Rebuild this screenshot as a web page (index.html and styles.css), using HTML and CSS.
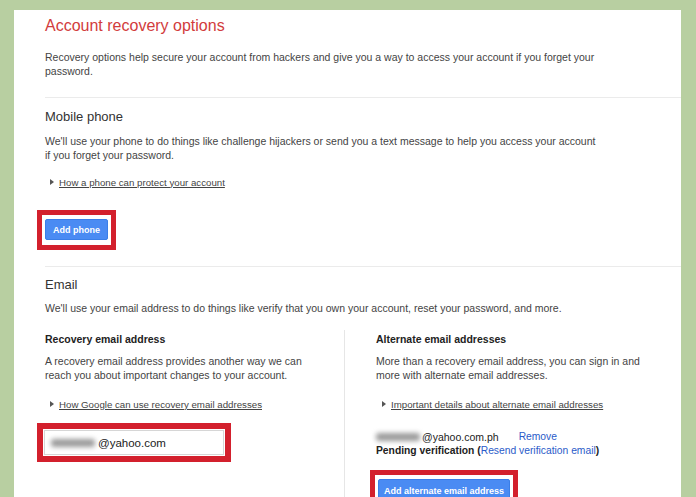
FILE: index.html
```html
<!DOCTYPE html>
<html>
<head>
<meta charset="utf-8">
<link rel="stylesheet" href="styles.css">
</head>
<body>
<div class="card">
  <h1 class="title">Account recovery options</h1>
  <p class="text intro">Recovery options help secure your account from hackers and give you a way to access your account if you forget your password.</p>

  <section class="sec sec-phone">
    <h2 class="heading">Mobile phone</h2>
    <p class="text desc">We'll use your phone to do things like challenge hijackers or send you a text message to help you access your account if you forget your password.</p>
    <div class="more"><span class="tri"></span><a class="more-link">How a phone can protect your account</a></div>
    <div class="hl hl-btn"><button class="btn">Add phone</button></div>
  </section>

  <section class="sec sec-email">
    <h2 class="heading">Email</h2>
    <p class="text desc">We'll use your email address to do things like verify that you own your account, reset your password, and more.</p>
    <div class="cols">
      <div class="col col-left">
        <h3 class="sub">Recovery email address</h3>
        <p class="text col-desc">A recovery email address provides another way we can reach you about important changes to your account.</p>
        <div class="more"><span class="tri"></span><a class="more-link">How Google can use recovery email addresses</a></div>
        <div class="hl hl-input"><div class="input"><span class="blur blur-a"></span>@yahoo.com</div></div>
      </div>
      <div class="col col-right">
        <h3 class="sub">Alternate email addresses</h3>
        <p class="text col-desc">More than a recovery email address, you can sign in and more with alternate email addresses.</p>
        <div class="more"><span class="tri"></span><a class="more-link">Important details about alternate email addresses</a></div>
        <div class="alt">
          <div class="alt-row"><span class="blur blur-b"></span><span class="alt-mail">@yahoo.com.ph</span><a class="blue">Remove</a></div>
          <div class="pending">Pending verification (<a class="blue">Resend verification email</a>)</div>
        </div>
        <div class="hl hl-btn hl-alt"><button class="btn">Add alternate email address</button></div>
      </div>
    </div>
  </section>
</div>
</body>
</html>
```

FILE: styles.css
```css
* { box-sizing: border-box; }
html, body { margin: 0; padding: 0; }
body {
  background: #b8cfa1;
  font-family: "Liberation Sans", Arial, sans-serif;
  width: 696px;
  height: 497px;
  overflow: hidden;
}
.card {
  margin: 10px 0 0 14px;
  width: 667px;
  min-height: 520px;
  background: #fff;
  padding: 6px 0 0 31px;
}
.title {
  margin: 0;
  font-size: 16px;
  line-height: 20px;
  font-weight: normal;
  color: #d23c3c;
}
.text {
  margin: 0;
  font-size: 10.5px;
  line-height: 14px;
  color: #444;
}
.intro { margin-top: 14px; width: 560px; }
.sec { border-top: 1px solid #ebebeb; }
.sec-phone { margin-top: 19px; padding-top: 10px; padding-bottom: 16px; }
.heading {
  margin: 0;
  font-size: 13px;
  line-height: 18px;
  font-weight: normal;
  color: #333;
}
.desc { margin-top: 8px; width: 553px; }
.sec-phone .more { margin-top: 13px; }
.more {
  display: flex;
  align-items: center;
  padding-left: 5px;
  height: 14px;
}
.tri {
  width: 0; height: 0;
  border-left: 4px solid #555;
  border-top: 3px solid transparent;
  border-bottom: 3px solid transparent;
  margin-right: 5px;
}
.more-link {
  font-size: 9.7px;
  color: #444;
  text-decoration: underline;
}
.hl {
  display: inline-block;
  border: 5px solid #d3202d;
  background: #fff;
}
.hl-btn { padding: 4px 3px 5px 3px; margin-left: -8px; }
.sec-phone .hl { margin-top: 21px; }
.btn {
  display: block;
  height: 21px;
  padding: 0 7px;
  border: 1px solid #3a7ee8;
  border-radius: 2px;
  background: #4a8bf3;
  color: #fff;
  font-family: "Liberation Sans", Arial, sans-serif;
  font-size: 9px;
  font-weight: bold;
}
.sec-email { padding-top: 9px; }
.sec-email .desc { margin-top: 7px; }
.cols { display: flex; margin-top: 15px; }
.col { padding-top: 2px; }
.col-left { width: 300px; border-right: 1px solid #e6e6e6; }
.col-right { padding-left: 31px; }
.sub {
  margin: 0;
  font-size: 10.5px;
  line-height: 14px;
  font-weight: bold;
  color: #222;
}
.col-desc { margin-top: 8px; width: 270px; }
.col .more { margin-top: 15px; }
.col-right .more { padding-left: 6px; }
.hl-input { margin-top: 12px; margin-left: -8px; padding: 1px; border-width: 6px; }
.input {
  width: 180px;
  height: 25px;
  border: 1px solid #d6d6d6;
  display: flex;
  align-items: center;
  padding-left: 6px;
  font-size: 11.5px;
  color: #222;
}
.blur {
  display: inline-block;
  height: 8px;
  background: #9a9a9a;
  filter: blur(2.5px);
  border-radius: 3px;
}
.blur-a { width: 44px; margin-right: 3px; }
.blur-b { width: 44px; margin-right: 2px; }
.alt { margin-top: 19px; font-size: 10.3px; line-height: 14px; color: #222; }
.alt-row { display: flex; align-items: center; }
.alt-mail { font-size: 10.5px; }
.blue { color: #2a5bc9; }
.alt-row .blue { margin-left: 20px; }
.pending { font-weight: bold; font-size: 10.3px; }
.pending .blue { font-weight: normal; }
.hl-alt { margin-top: 12px; margin-left: -6px; }
.hl-alt .btn { height: 24px; padding: 0 5px; }
```
